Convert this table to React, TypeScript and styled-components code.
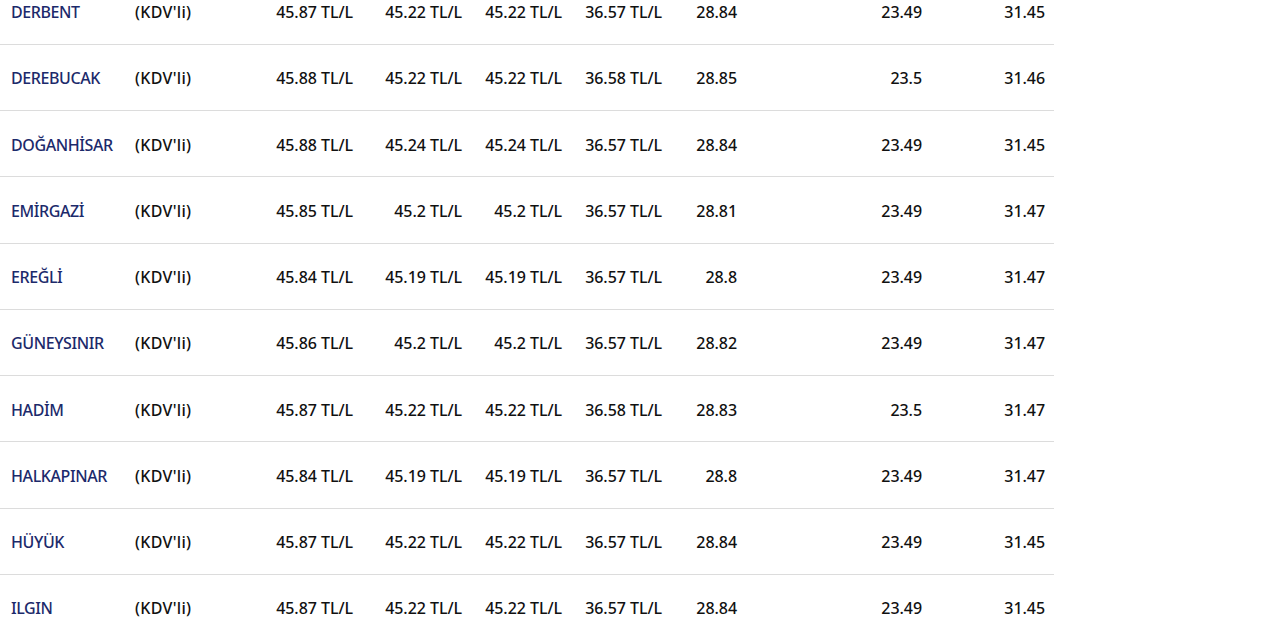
import styled, { createGlobalStyle } from "styled-components";

const GlobalStyle = createGlobalStyle`
  html, body {
    margin: 0;
    padding: 0;
    background: #ffffff;
    overflow: hidden;
  }
`;

type Row = {
  name: string;
  benzin: string;
  motorin: string;
  motorinPlus: string;
  lpg: string;
  fuel: string;
  gaz: string;
  kalorifer: string;
};

const rows: Row[] = [
  { name: "DERBENT", benzin: "45.87 TL/L", motorin: "45.22 TL/L", motorinPlus: "45.22 TL/L", lpg: "36.57 TL/L", fuel: "28.84", gaz: "23.49", kalorifer: "31.45" },
  { name: "DEREBUCAK", benzin: "45.88 TL/L", motorin: "45.22 TL/L", motorinPlus: "45.22 TL/L", lpg: "36.58 TL/L", fuel: "28.85", gaz: "23.5", kalorifer: "31.46" },
  { name: "DOĞANHİSAR", benzin: "45.88 TL/L", motorin: "45.24 TL/L", motorinPlus: "45.24 TL/L", lpg: "36.57 TL/L", fuel: "28.84", gaz: "23.49", kalorifer: "31.45" },
  { name: "EMİRGAZİ", benzin: "45.85 TL/L", motorin: "45.2 TL/L", motorinPlus: "45.2 TL/L", lpg: "36.57 TL/L", fuel: "28.81", gaz: "23.49", kalorifer: "31.47" },
  { name: "EREĞLİ", benzin: "45.84 TL/L", motorin: "45.19 TL/L", motorinPlus: "45.19 TL/L", lpg: "36.57 TL/L", fuel: "28.8", gaz: "23.49", kalorifer: "31.47" },
  { name: "GÜNEYSINIR", benzin: "45.86 TL/L", motorin: "45.2 TL/L", motorinPlus: "45.2 TL/L", lpg: "36.57 TL/L", fuel: "28.82", gaz: "23.49", kalorifer: "31.47" },
  { name: "HADİM", benzin: "45.87 TL/L", motorin: "45.22 TL/L", motorinPlus: "45.22 TL/L", lpg: "36.58 TL/L", fuel: "28.83", gaz: "23.5", kalorifer: "31.47" },
  { name: "HALKAPINAR", benzin: "45.84 TL/L", motorin: "45.19 TL/L", motorinPlus: "45.19 TL/L", lpg: "36.57 TL/L", fuel: "28.8", gaz: "23.49", kalorifer: "31.47" },
  { name: "HÜYÜK", benzin: "45.87 TL/L", motorin: "45.22 TL/L", motorinPlus: "45.22 TL/L", lpg: "36.57 TL/L", fuel: "28.84", gaz: "23.49", kalorifer: "31.45" },
  { name: "ILGIN", benzin: "45.87 TL/L", motorin: "45.22 TL/L", motorinPlus: "45.22 TL/L", lpg: "36.57 TL/L", fuel: "28.84", gaz: "23.49", kalorifer: "31.45" },
];

const colWidths = [135, 100, 127, 109, 100, 100, 75, 185, 123];

const App = () => {
  return (
    <>
      <GlobalStyle />
      <Table>
        <colgroup>
          {colWidths.map((w, i) => (
            <Col key={i} $w={w} />
          ))}
        </colgroup>
        <tbody>
          {rows.map((r) => (
            <Tr key={r.name}>
              <NameTd>{r.name}</NameTd>
              <KdvTd>(KDV'li)</KdvTd>
              <NumTd>{r.benzin}</NumTd>
              <NumTd>{r.motorin}</NumTd>
              <NumTd>{r.motorinPlus}</NumTd>
              <NumTd>{r.lpg}</NumTd>
              <NumTd>{r.fuel}</NumTd>
              <NumTd>{r.gaz}</NumTd>
              <NumTd>{r.kalorifer}</NumTd>
            </Tr>
          ))}
        </tbody>
      </Table>
    </>
  );
};

const Table = styled.table`
  width: 1054px;
  margin-top: -22px;
  border-collapse: collapse;
  border-spacing: 0;
  table-layout: fixed;
  font-family: "Noto Sans", "Open Sans", sans-serif;
  font-size: 16px;
  color: #111111;
`;
const Col = styled.col<{ $w: number }>`
  width: ${(p) => p.$w}px;
`;
const Tr = styled.tr`
  height: 66.25px;
  border-bottom: 1px solid #dcdcdc;
`;
const NameTd = styled.td`
  padding: 2px 0 0 11px;
  color: #1c2a6b;
  font-weight: 500;
  letter-spacing: -0.4px;
  white-space: nowrap;
`;
const KdvTd = styled.td`
  padding: 2px 0 0 0;
  font-weight: 500;
  letter-spacing: 0.3px;
  white-space: nowrap;
`;
const NumTd = styled.td`
  padding: 2px 9px 0 0;
  text-align: right;
  font-weight: 500;
  letter-spacing: -0.05px;
  white-space: nowrap;
`;

export default App;
